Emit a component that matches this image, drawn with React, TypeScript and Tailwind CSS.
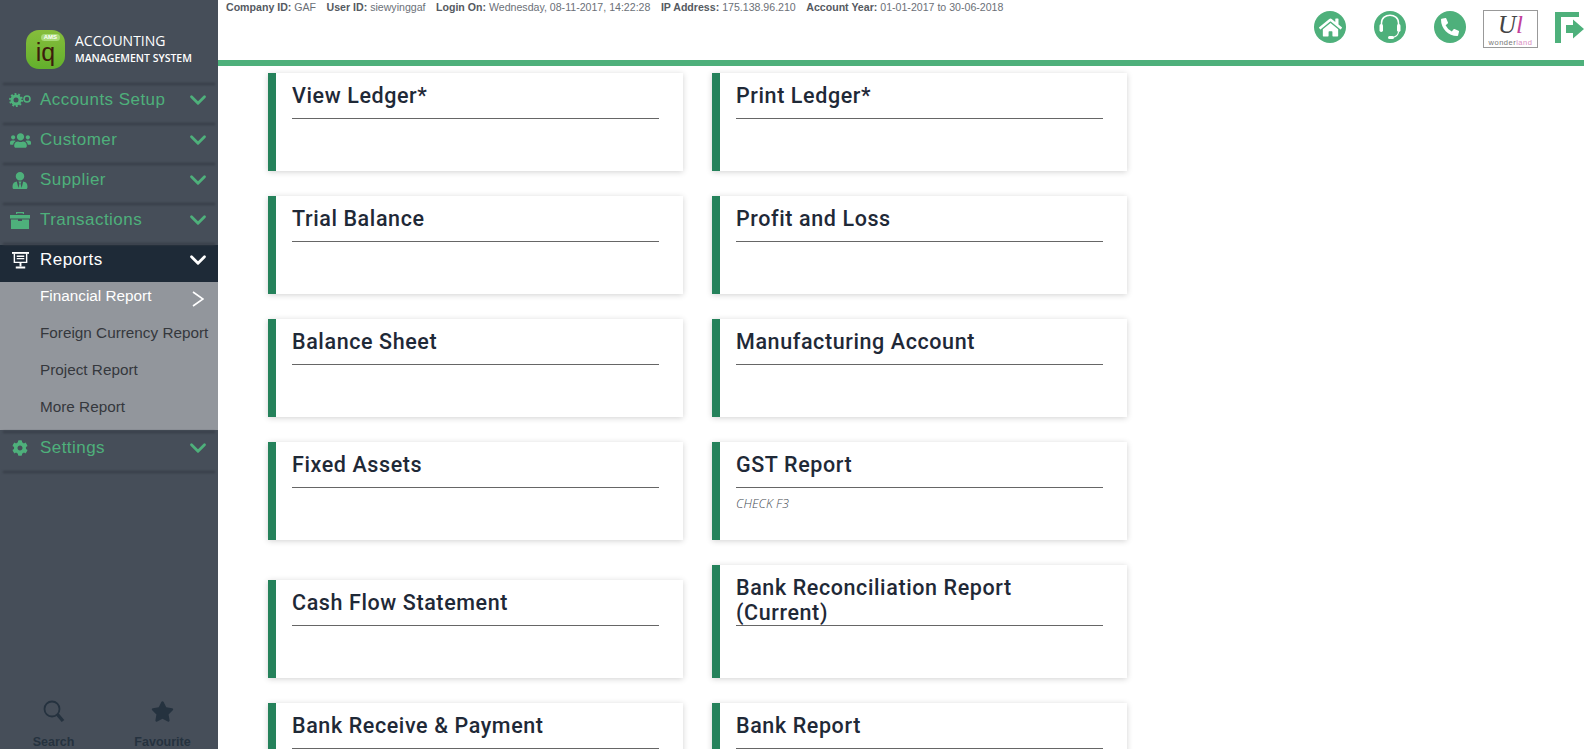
import { ChevronDown } from "lucide-react";
import { FaCog, FaHome, FaPhoneAlt, FaStar, FaUsers, FaUserTie } from "react-icons/fa";

const menus = [
  { label: "Accounts Setup", icon: <GearsIcon /> },
  { label: "Customer", icon: <FaUsers className="w-[21px] h-[21px]" /> },
  { label: "Supplier", icon: <FaUserTie className="w-[16px] h-[17px]" /> },
  { label: "Transactions", icon: <ToolboxIcon /> },
];

const subItems = ["Foreign Currency Report", "Project Report", "More Report"];

const cards = [
  { title: "View Ledger*" },
  { title: "Print Ledger*" },
  { title: "Trial Balance" },
  { title: "Profit and Loss" },
  { title: "Balance Sheet" },
  { title: "Manufacturing Account" },
  { title: "Fixed Assets" },
  { title: "GST Report", note: "CHECK F3" },
  { title: "Cash Flow Statement" },
  { title: "Bank Reconciliation Report\n(Current)" },
  { title: "Bank Receive & Payment" },
  { title: "Bank Report" },
];

const info = [
  ["Company ID:", "GAF"],
  ["User ID:", "siewyinggaf"],
  ["Login On:", "Wednesday, 08-11-2017, 14:22:28"],
  ["IP Address:", "175.138.96.210"],
  ["Account Year:", "01-01-2017 to 30-06-2018"],
];

function GearsIcon() {
  return (
    <svg viewBox="0 0 22 14" className="w-[22px] h-[14px]" fill="none" stroke="currentColor">
      <circle cx="7" cy="7" r="4" strokeWidth="3" />
      <circle cx="7" cy="7" r="5.8" strokeWidth="2.4" strokeDasharray="1.8 1.8" />
      <circle cx="18" cy="6" r="3" strokeWidth="1.6" />
    </svg>
  );
}

function ToolboxIcon() {
  return (
    <svg viewBox="0 0 20 18" className="w-[20px] h-[18px]" fill="currentColor">
      <path d="M6 3V1h8v2h-1.2V2.2H7.2V3z" />
      <path d="M0 4h20v3.5H0z" />
      <path d="M1 8.5h7V10h4V8.5h7V18H1z" />
    </svg>
  );
}

function BoardIcon() {
  return (
    <svg viewBox="0 0 18 18" className="w-[17px] h-[18px]" fill="none" stroke="currentColor" strokeWidth="1.5">
      <path d="M0 1.5h18" strokeWidth="2" />
      <path d="M2.5 2v9.5h13V2" />
      <path d="M5 5h8M5 7.5h8" />
      <path d="M9 11.5v4M4 17h10" strokeWidth="2" />
    </svg>
  );
}

function HeadsetIcon() {
  return (
    <svg viewBox="0 0 32 32" className="w-8 h-8">
      <circle cx="16" cy="16" r="16" fill="#4eb07b" />
      <path d="M7.5 15v-3c0-10.500 17-10.500 17 0v3" fill="none" stroke="#fff" strokeWidth="1.500" />
      <rect x="5.500" y="13" width="3.500" height="8" rx="1.700" fill="#fff" />
      <rect x="23" y="13" width="3.500" height="8" rx="1.700" fill="#fff" />
      <path d="M24.500 21c-.5 3.500-3 5-6 5.500" fill="none" stroke="#fff" strokeWidth="1.200" />
      <rect x="14" y="25" width="6" height="3" rx="1.500" fill="#fff" />
    </svg>
  );
}

function LogoutIcon() {
  return (
    <svg viewBox="0 0 29 31" className="w-[29px] h-[31px]" fill="#4eb07b">
      <path d="M0 0h24v5H6v26H0z" />
      <path d="M11 13h7V7.500L29 17 18 26.500V21h-7z" />
    </svg>
  );
}

function MenuRow({ label, icon, active }: { label: string; icon: React.ReactNode; active?: boolean }) {
  return (
    <div className={`flex items-center h-[37px] pb-[7px] ${active ? "bg-[#1e2a37] text-white" : "text-[#4eb07b]"}`}>
      <span className="w-[40px] flex justify-center shrink-0">{icon}</span>
      <span className="flex-1 text-[17px] tracking-[0.45px]">{label}</span>
      <ChevronDown className="w-[26px] h-[26px] mr-[7px]" strokeWidth={2.6} />
    </div>
  );
}

function Divider() {
  return (
    <div className="h-[3px] px-[3px] py-[0.5px]">
      <div className="h-[2px] bg-[#363c46] blur-[1px]" />
    </div>
  );
}

function Card({ title, note }: { title: string; note?: string }) {
  return (
    <div className="bg-white border-l-[8px] border-[#25825b] shadow-[0_1px_6px_rgba(0,0,0,0.18)] pl-[16px] pr-[24px] pt-[10px] overflow-hidden">
      <h3 className="min-h-[36px] border-b border-[#666666] whitespace-pre-line text-[21.5px] leading-[25px] font-medium tracking-[0.6px] text-[#1f2937] font-['Roboto',sans-serif]">
        {title}
      </h3>
      <div className="h-[52px] pt-[7px]">
        {note && <p className="text-[12.5px] leading-[18px] font-light italic text-[#454b53] font-['Open_Sans',sans-serif]">{note}</p>}
      </div>
    </div>
  );
}

export default function App() {
  return (
    <div className="flex h-[749px] w-[1584px] overflow-hidden bg-white font-['Liberation_Sans',sans-serif]">
      {/* Sidebar */}
      <aside className="w-[218px] shrink-0 bg-[#464e59] flex flex-col">
        <div className="h-[82px] pt-[30px] pl-[26px] flex items-start gap-[10px]">
          <div className="relative w-[39px] h-[39px] rounded-[13px] bg-gradient-to-b from-[#86bd3c] to-[#62b02c] flex items-center justify-center overflow-hidden">
            <span className="absolute top-[4px] right-[5px] px-[3px] rounded-full bg-[#a7d977] text-white text-[6px] font-bold leading-[7px]">AMS</span>
            <span className="mt-[6px] text-[25px] leading-none text-[#3d1c0c]">iq</span>
          </div>
          <div className="text-white font-['Open_Sans',sans-serif]">
            <div className="text-[14px] leading-[18px] mt-[2px]">ACCOUNTING</div>
            <div className="text-[10.5px] leading-[16px] font-semibold">MANAGEMENT SYSTEM</div>
          </div>
        </div>
        <Divider />
        {menus.map((m) => (
          <div key={m.label}>
            <MenuRow label={m.label} icon={m.icon} />
            <Divider />
          </div>
        ))}
        <MenuRow label="Reports" icon={<BoardIcon />} active />
        <div className="h-[148px] bg-[#92969c] text-[15.3px] text-[#35383d]">
          <div className="h-[37px] pl-[40px] pb-[8px] flex items-center text-white">
            <span className="flex-1">Financial Report</span>
            <svg viewBox="0 0 12 16" className="w-[12px] h-[16px] mr-[14px] mt-[4px]" fill="none" stroke="currentColor" strokeWidth="1.6">
              <path d="M1 1l10 7-10 7" />
            </svg>
          </div>
          {subItems.map((s) => (
            <div key={s} className="h-[37px] pl-[40px] pb-[8px] flex items-center whitespace-nowrap">
              {s}
            </div>
          ))}
        </div>
        <Divider />
        <MenuRow label="Settings" icon={<FaCog className="w-[16px] h-[16px]" />} />
        <Divider />
        <div className="mt-auto flex text-[#25323f]">
          <div className="w-[107px] flex flex-col items-center gap-[12px]">
            <svg viewBox="0 0 22 23" className="w-[22px] h-[23px]" fill="none" stroke="currentColor">
              <circle cx="9" cy="9" r="7.500" strokeWidth="1.800" />
              <path d="M14.500 14.500L20 21" strokeWidth="3.400" />
            </svg>
            <span className="text-[12.5px] leading-[14px] font-bold">Search</span>
          </div>
          <div className="w-[111px] flex flex-col items-center gap-[12px]">
            <FaStar className="w-[23px] h-[23px]" />
            <span className="text-[12.5px] leading-[14px] font-bold">Favourite</span>
          </div>
        </div>
      </aside>

      {/* Main */}
      <div className="flex-1 flex flex-col min-w-0">
        <header className="relative h-[66px] shrink-0 border-b-[6px] border-[#4eb07b]">
          <div className="flex gap-[10.5px] pl-[8px] pt-[1px] text-[10.6px] leading-[12px] text-[#6b7077] whitespace-nowrap">
            {info.map(([k, v]) => (
              <span key={k}>
                <b className="text-[#555a61]">{k}</b> {v}
              </span>
            ))}
          </div>
          <div className="absolute right-0 top-[10px] flex items-start">
            <div className="w-[32px] h-[32px] mt-[1px] rounded-full bg-[#4eb07b] flex items-center justify-center text-white">
              <FaHome className="w-[23px] h-[23px]" />
            </div>
            <div className="ml-[28px] mt-[1px]">
              <HeadsetIcon />
            </div>
            <div className="ml-[28px] mt-[1px] w-[32px] h-[32px] rounded-full bg-[#4eb07b] flex items-center justify-center text-white">
              <FaPhoneAlt className="w-[18px] h-[18px]" />
            </div>
            <div className="ml-[17px] w-[55px] h-[38px] border border-[#999999] flex flex-col items-center overflow-hidden">
              <div className="flex h-[28px]">
                <span className="text-[25px] leading-[28px] italic text-[#444444] font-['Liberation_Serif',serif]">U</span>
                <span className="text-[25px] leading-[28px] italic text-[#c2409a] font-['Liberation_Serif',serif]">l</span>
              </div>
              <span className="text-[7.5px] leading-[8px] tracking-[0.5px] text-[#777777]">
                wonder<span className="text-[#d98cc0]">land</span>
              </span>
            </div>
            <div className="ml-[17px] mt-[2px]">
              <LogoutIcon />
            </div>
          </div>
        </header>

        <main className="pl-[50px] pt-[7px] grid grid-cols-[415px_415px] gap-x-[29px] gap-y-[25px] items-end content-start">
          {cards.map((c) => (
            <Card key={c.title} title={c.title} note={c.note} />
          ))}
        </main>
      </div>
    </div>
  );
}
